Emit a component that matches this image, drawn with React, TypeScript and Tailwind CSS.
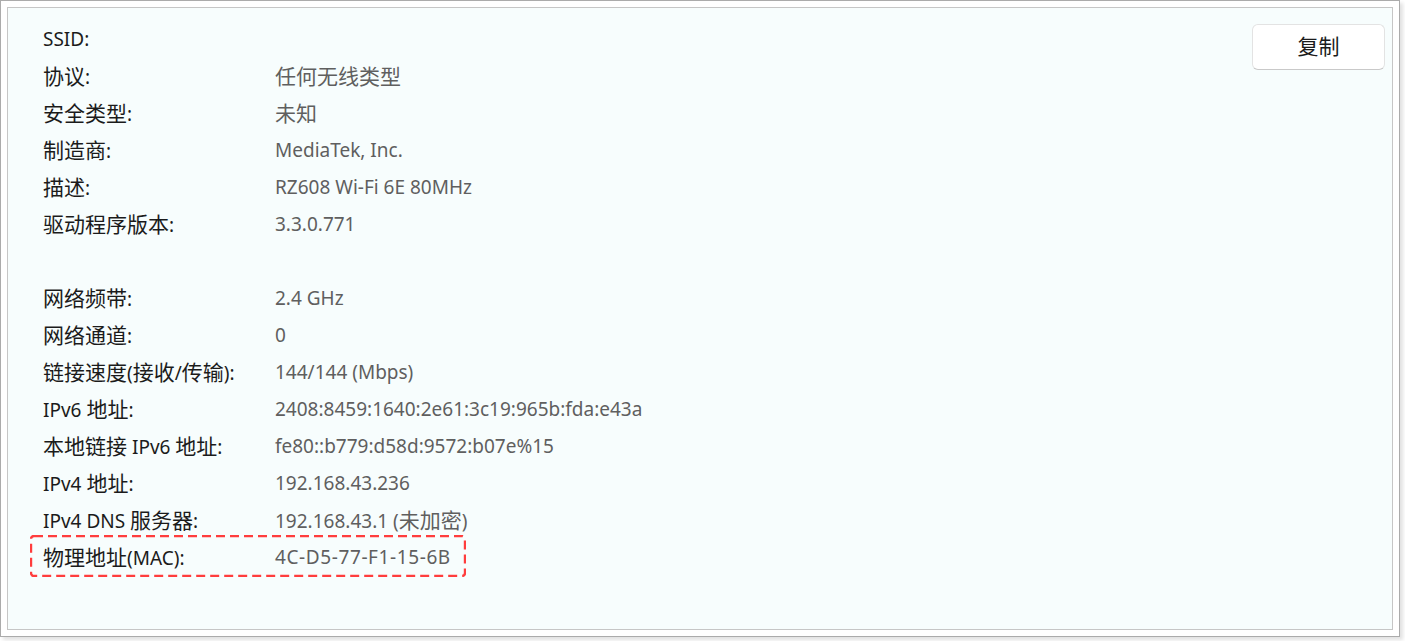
import React from "react";

const rows: [string, string][] = [
  ["SSID:", ""],
  ["协议:", "任何无线类型"],
  ["安全类型:", "未知"],
  ["制造商:", "MediaTek, Inc."],
  ["描述:", "RZ608 Wi-Fi 6E 80MHz"],
  ["驱动程序版本:", "3.3.0.771"],
  ["", ""],
  ["网络频带:", "2.4 GHz"],
  ["网络通道:", "0"],
  ["链接速度(接收/传输):", "144/144 (Mbps)"],
  ["IPv6 地址:", "2408:8459:1640:2e61:3c19:965b:fda:e43a"],
  ["本地链接 IPv6 地址:", "fe80::b779:d58d:9572:b07e%15"],
  ["IPv4 地址:", "192.168.43.236"],
  ["IPv4 DNS 服务器:", "192.168.43.1 (未加密)"],
];

// CJK runs are set a bit larger than latin, like YaHei next to Segoe UI
function Mixed({ text }: { text: string }) {
  const parts = text.split(/([\u4e00-\u9fff]+)/);
  return (
    <>
      {parts.map((p, i) =>
        /[\u4e00-\u9fff]/.test(p) ? (
          <span key={i} className="text-[21px]">
            {p}
          </span>
        ) : (
          <span key={i}>{p}</span>
        )
      )}
    </>
  );
}

function Row({ label, value, wide }: { label: string; value: string; wide?: boolean }) {
  return (
    <div className="grid h-[37px] grid-cols-[232px_1fr] items-center leading-none">
      <div className="text-[#1b1b1b]">
        <Mixed text={label} />
      </div>
      <div className={wide ? "tracking-[0.6px] text-[#5f5f5f]" : "text-[#5f5f5f]"}>
        <Mixed text={value} />
      </div>
    </div>
  );
}

export default function App() {
  return (
    <div className="h-[641px] w-[1405px] bg-white font-['Noto_Sans','Noto_Sans_CJK_SC',sans-serif] text-[19px]">
      <div className="h-[637px] w-[1400px] border border-[#ababab] bg-white p-[6px] shadow-[3px_3px_4px_rgba(0,0,0,0.12)]">
        <div className="relative flex h-full w-full border border-[#c6c6c6] bg-[#f7fdfd]">
          <div className="flex-1 pl-[35px] pt-[13px]">
            {rows.map(([l, v], i) => (
              <Row key={i} label={l} value={v} />
            ))}
            <div className="relative w-[436px] -ml-[13px] pl-[13px]">
              <Row label="物理地址(MAC):" value="4C-D5-77-F1-15-6B" wide />
              <svg
                className="pointer-events-none absolute left-0 top-[-4px]"
                width="436"
                height="42"
                viewBox="0 0 436 42"
              >
                <rect
                  x="1"
                  y="1"
                  width="434"
                  height="40"
                  rx="3"
                  fill="none"
                  stroke="#ff3d3d"
                  strokeWidth="2.4"
                  strokeDasharray="9 5"
                />
              </svg>
            </div>
          </div>
          <div className="pr-[7px] pt-[16px]">
            <button className="flex h-[46px] w-[133px] items-center justify-center rounded-[6px] border border-[#e3e3e3] border-b-[#c9c9c9] bg-white text-[21px] text-[#1b1b1b]">
              复制
            </button>
          </div>
        </div>
      </div>
    </div>
  );
}
